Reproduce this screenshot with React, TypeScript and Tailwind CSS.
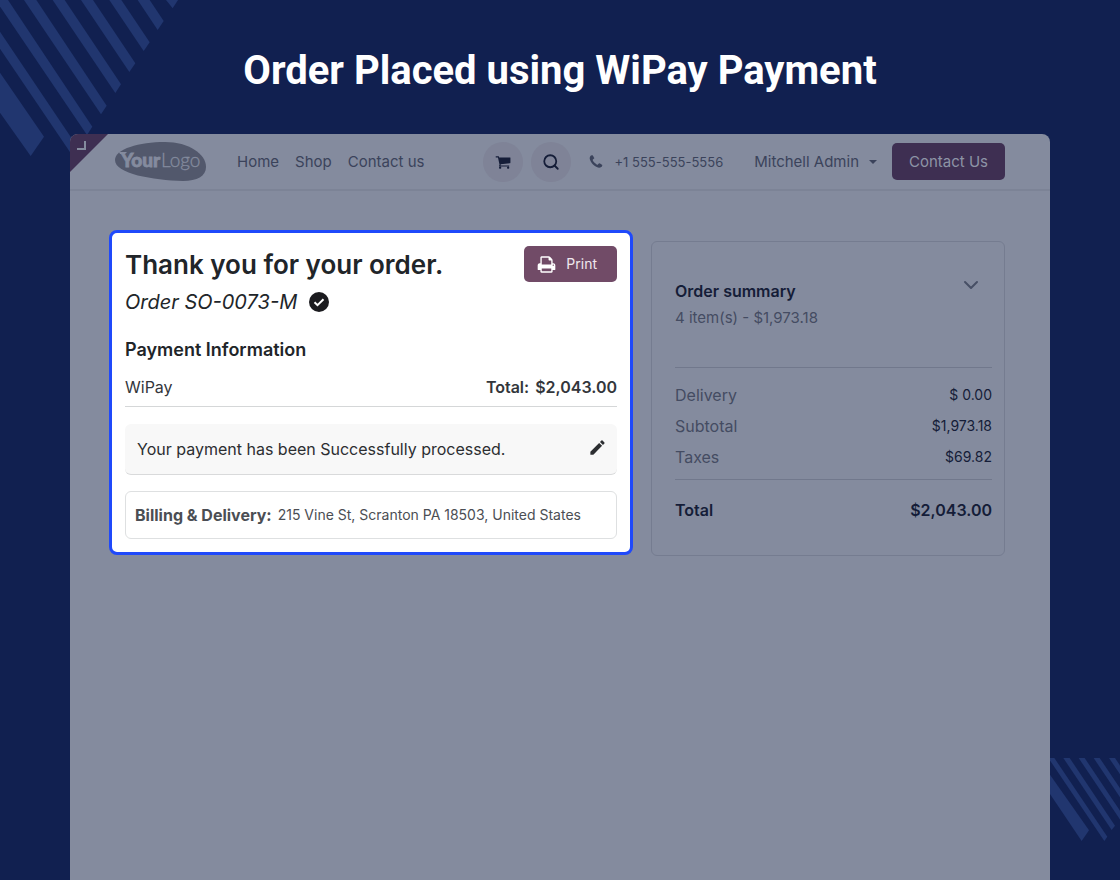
import type { ReactNode } from 'react';
import { ChevronDown, Search } from 'lucide-react';
import { MdEdit } from 'react-icons/md';

const NAV_LINKS = ['Home', 'Shop', 'Contact us'];

const SUMMARY_ROWS = [
  { label: 'Delivery', amount: '$ 0.00' },
  { label: 'Subtotal', amount: '$1,973.18' },
  { label: 'Taxes', amount: '$69.82' },
];

const CART_PATH =
  'M704 1536q0 52-38 90t-90 38-90-38-38-90 38-90 90-38 90 38 38 90zm896 0q0 52-38 90t-90 38-90-38-38-90 38-90 90-38 90 38 38 90zm128-1088v512q0 24-16.5 42.5t-40.5 21.5l-1044 122q13 60 13 70 0 16-24 64h920q26 0 45 19t19 45-19 45-45 19h-1024q-26 0-45-19t-19-45q0-11 8-31.5t16-36 21.5-40 15.5-29.5l-177-823h-204q-26 0-45-19t-19-45 19-45 45-19h256q16 0 28.5 6.500t19.5 15.5 13 24.5 8 26 5.500 29.5 4.500 26h1201q26 0 45 19t19 45z';
const PHONE_PATH =
  'M1600 1240q0 27-10 70.5t-21 68.5q-21 50-122 106-94 51-186 51-27 0-53-3.500t-57.5-12.5-47-14.5-55.5-20.5-49-18q-98-35-175-83-127-79-264-216t-216-264q-48-77-83-175-3-9-18-49t-20.5-55.5-14.5-47-12.5-57.5-3.500-53q0-92 51-186 56-101 106-122 25-11 68.5-21t70.5-10q14 0 21 3 18 6 53 76 11 19 30 54t35 63.5 31 53.5q3 4 17.5 25t21.5 35.5 7 28.5q0 20-28.5 50t-62 55-62 53-28.5 46q0 9 5 22.5t8.500 20.5 14 24 11.5 19q76 137 174 235t235 174q2 1 19 11.5t24 14 20.5 8.500 22.5 5q18 0 46-28.5t53-62 55-62 50-28.5q14 0 28.5 7t35.5 21.5 25 17.5q25 15 53.5 31t63.5 35 54 30q70 35 76 53 3 7 3 21z';
const PRINT_PATH =
  'M448 1536h896v-256h-896v256zm0-640h896v-384h-160q-40 0-68-28t-28-68v-160h-640v640zm1152 64q0-26-19-45t-45-19-45 19-19 45 19 45 45 19 45-19 19-45zm128 0v416q0 13-9.500 22.5t-22.5 9.500h-224v160q0 40-28 68t-68 28h-960q-40 0-68-28t-28-68v-160h-224q-13 0-22.5-9.500t-9.500-22.5v-416q0-79 56.5-135.5t135.5-56.5h64v-544q0-40 28-68t68-28h672q40 0 88 20t76 48l152 152q28 28 48 76t20 88v256h64q79 0 135.5 56.5t56.5 135.5z';

function Glyph({ d, className }: { d: string; className: string }) {
  return (
    <svg viewBox="0 0 1792 1792" fill="currentColor" className={className} aria-hidden="true">
      <path d={d} />
    </svg>
  );
}

function TopStripes() {
  return (
    <svg
      viewBox="0 0 540 480"
      className="absolute left-0 top-0 h-[160px] w-[180px] fill-[#21366f]"
      aria-hidden="true"
    >
      <polygon points="498,0 534,0 518,25" />
      <polygon points="413,0 449,0 491,63 473,90" />
      <polygon points="328,0 364,0 449,127 431,153" />
      <polygon points="243,0 279,0 406,190 388,216" />
      <polygon points="158,0 194,0 363,253 346,279" />
      <polygon points="72,0 109,0 320,317 303,343" />
      <polygon points="-13,0 24,0 277,380 261,405" />
      <polygon points="0,95 234,443 218,468 0,146" />
      <polygon points="0,218 132,410 92,468 0,338" />
    </svg>
  );
}

function BottomStripes() {
  return (
    <svg
      viewBox="0 0 210 252"
      className="absolute right-0 top-[758px] h-[84px] w-[70px] fill-[#21366f]"
      aria-hidden="true"
    >
      <polygon points="0,50 117,217 95,249 0,108" />
      <polygon points="-5,0 13,0 172,236 163,249" />
      <polygon points="40,0 59,0 195,203 185,216" />
      <polygon points="86,0 104,0 240,203 231,216" />
      <polygon points="131,0 149,0 240,135 231,149" />
      <polygon points="177,0 195,0 240,67 231,80" />
    </svg>
  );
}

function Logo() {
  return (
    <svg viewBox="0 0 92 40" className="h-[40px] w-[92px]" role="img" aria-label="Your Logo">
      <path
        d="M0 18C0 7 24 0 50 0C74 0 91 12 91 25C91 34 82 39 68 39C38 38 0 32 0 18Z"
        fill="#52586c"
      />
      <path d="M4 10h8l-2 2h-5z" fill="#848b9e" />
      <g fill="#848b9e" stroke="#848b9e" fontSize="19" className="font-['Lato',sans-serif]">
        <text x="6" y="25" fontWeight="900" strokeWidth="0.8">
          Your
        </text>
        <text x="46" y="25" fontWeight="300" strokeWidth="0.3">
          Logo
        </text>
      </g>
    </svg>
  );
}

function RoundButton({ label, children }: { label: string; children: ReactNode }) {
  return (
    <button
      aria-label={label}
      className="flex size-10 items-center justify-center rounded-full bg-[#7f8397] text-[#151d38]"
    >
      {children}
    </button>
  );
}

function Header() {
  return (
    <header className="flex h-[57px] items-center justify-between border-b-2 border-[#7c8396] px-[45px] text-[15px] leading-6 text-[#3b435b]">
      <div className="flex items-center gap-[30px]">
        <a href="#">
          <Logo />
        </a>
        <nav className="flex gap-4">
          {NAV_LINKS.map((link) => (
            <a key={link} href="#">
              {link}
            </a>
          ))}
        </nav>
      </div>
      <div className="flex items-center">
        <div className="flex gap-2">
          <RoundButton label="Cart">
            <Glyph d={CART_PATH} className="size-4" />
          </RoundButton>
          <RoundButton label="Search">
            <Search className="size-[18px]" strokeWidth={2.4} />
          </RoundButton>
        </div>
        <a href="#" className="ml-[17px] flex items-center gap-[11px] text-[13px] leading-6">
          <Glyph d={PHONE_PATH} className="size-4" />
          +1 555-555-5556
        </a>
        <button className="ml-[31px] flex items-center gap-[10px]">
          Mitchell Admin
          <svg viewBox="0 0 8 4" className="h-1 w-2" fill="currentColor" aria-hidden="true">
            <path d="M0 0h8L4 4z" />
          </svg>
        </button>
        <button className="ml-[15px] h-[37px] rounded-[5px] bg-[#3e2f52] px-[17px] text-[#8d94a6]">
          Contact Us
        </button>
      </div>
    </header>
  );
}

function OrderConfirmation() {
  return (
    <section className="self-start rounded-lg border-[3px] border-[#1f49fb] bg-white p-[13px] text-[#212529]">
      <div className="flex items-start justify-between">
        <h2 className="text-[26px] font-semibold leading-[38px]">Thank you for your order.</h2>
        <button className="flex h-9 items-center gap-[10px] rounded-[5px] bg-[#714b67] pl-[13px] pr-5 text-sm text-[#eee8ed]">
          <Glyph d={PRINT_PATH} className="size-[19px] text-white" />
          Print
        </button>
      </div>
      <div className="mt-[2px] flex items-center gap-3">
        <em className="text-xl leading-8">Order SO-0073-M</em>
        <svg viewBox="0 0 20 20" className="size-5" aria-hidden="true">
          <circle cx="10" cy="10" r="10" fill="#1b1b1f" />
          <path d="M5.500 10.200l3 3 6-6" fill="none" stroke="#fff" strokeWidth="2" />
        </svg>
      </div>
      <h3 className="mt-[18px] text-lg font-semibold leading-7">Payment Information</h3>
      <div className="mt-[7px] flex justify-between border-b border-[#d5d7d8] pb-[3px] text-base leading-8 text-[#33363b]">
        <span>WiPay</span>
        <span className="flex gap-[6px] font-semibold">
          <span>Total:</span>
          <span>$2,043.00</span>
        </span>
      </div>
      <div className="mt-[17px] flex h-[51px] items-center justify-between rounded-md border-b border-[#d9dadb] bg-[#f8f8f8] pl-3 pr-[10px] text-base text-[#2c2e31]">
        <p>Your payment has been Successfully processed.</p>
        <button aria-label="Edit payment message" className="mb-1">
          <MdEdit className="size-[19px]" />
        </button>
      </div>
      <div className="mt-4 flex h-12 items-center gap-[6px] rounded-md border border-[#dee0e1] px-[9px] text-[#4b4e54]">
        <span className="text-base font-bold">Billing &amp; Delivery:</span>
        <span className="text-sm">215 Vine St, Scranton PA 18503, United States</span>
      </div>
    </section>
  );
}

function OrderSummary() {
  return (
    <aside className="mt-[11px] self-start rounded-md border border-[#757c90] pb-[29px] pl-[23px] pr-3 pt-[31px]">
      <div className="flex items-start justify-between pb-[35px]">
        <div className="pt-[5px]">
          <h3 className="text-base font-semibold leading-[26px] text-[#151d38]">Order summary</h3>
          <p className="text-[15px] leading-7 text-[#444c62]">4 item(s) - $1,973.18</p>
        </div>
        <button aria-label="Toggle summary" className="mr-[9px] text-[#474f65]">
          <ChevronDown className="size-6" strokeWidth={2} />
        </button>
      </div>
      <table className="w-full border-y border-[#71788c]">
        <tbody>
          {SUMMARY_ROWS.map(({ label, amount }) => (
            <tr key={label} className="h-[31px] first:h-[43px] last:h-[38px] first:*:pt-3 last:*:pb-[6px]">
              <th scope="row" className="text-left text-base font-normal text-[#444c62]">
                {label}
              </th>
              <td className="text-right text-sm text-[#151d38]">{amount}</td>
            </tr>
          ))}
        </tbody>
      </table>
      <div className="mt-[14px] flex justify-between text-base font-semibold leading-8 text-[#151d38]">
        <span>Total</span>
        <span>$2,043.00</span>
      </div>
    </aside>
  );
}

export default function App() {
  return (
    <div className="relative flex min-h-screen flex-col overflow-hidden bg-[#112050] font-['Inter',sans-serif]">
      <TopStripes />
      <BottomStripes />
      <h1 className="pb-[39px] pt-[47px] text-center font-['Roboto',sans-serif] text-[40px] font-bold leading-[48px] text-white">
        Order Placed using WiPay Payment
      </h1>
      <div className="relative mx-[70px] flex-1 overflow-hidden rounded-t-lg bg-[#848b9e]">
        <svg viewBox="0 0 38 38" className="absolute left-0 top-0 size-[38px]" aria-hidden="true">
          <path d="M0 0h38L0 38z" fill="#3e2f52" />
          <path d="M7 15h8V7" fill="none" stroke="#848b9e" strokeWidth="2" />
        </svg>
        <Header />
        <main className="grid grid-cols-[524fr_354fr] gap-[18px] pb-10 pl-[39px] pr-[45px] pt-[39px]">
          <OrderConfirmation />
          <OrderSummary />
        </main>
      </div>
    </div>
  );
}
